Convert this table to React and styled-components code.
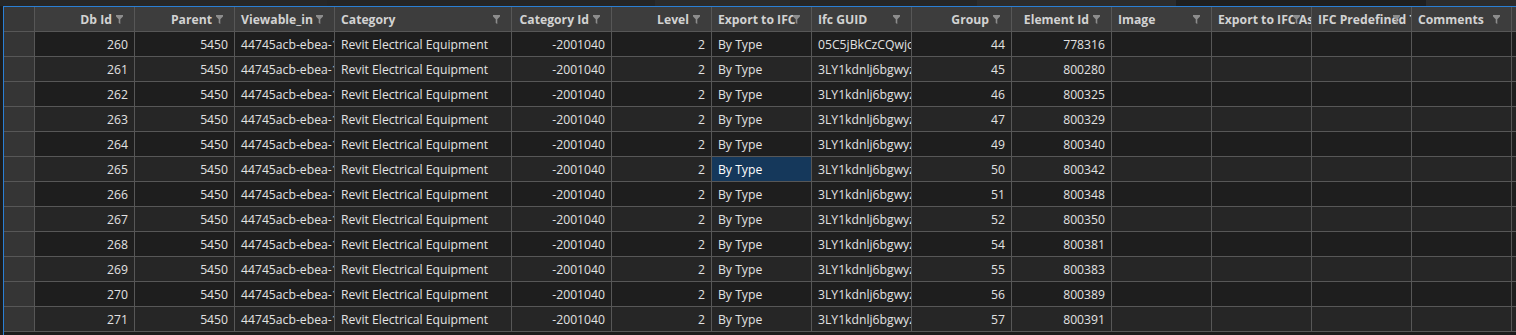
import React from 'react';
import styled, { createGlobalStyle } from 'styled-components';

const GlobalStyle = createGlobalStyle`
    html, body {
        margin: 0;
        height: 100%;
        overflow: hidden;
        background: #1c1c1c;
    }
    #root {
        height: 100%;
    }
`;

const columns = [
    { key: 'dbId', title: 'Db Id', width: 100, align: 'right' },
    { key: 'parent', title: 'Parent', width: 100, align: 'right' },
    { key: 'viewable', title: 'Viewable_in', width: 100, align: 'left' },
    { key: 'category', title: 'Category', width: 177, align: 'left' },
    { key: 'categoryId', title: 'Category Id', width: 100, align: 'right' },
    { key: 'level', title: 'Level', width: 100, align: 'right' },
    { key: 'exportIfc', title: 'Export to IFC', width: 100, align: 'left' },
    { key: 'guid', title: 'Ifc GUID', width: 100, align: 'left' },
    { key: 'group', title: 'Group', width: 100, align: 'right' },
    { key: 'elementId', title: 'Element Id', width: 100, align: 'right' },
    { key: 'image', title: 'Image', width: 100, align: 'left' },
    { key: 'exportAs', title: 'Export to IFC As', width: 100, align: 'left' },
    { key: 'predefined', title: 'IFC Predefined Type', width: 100, align: 'left' },
    { key: 'comments', title: 'Comments', width: 100, align: 'left' },
    { key: 'mark', title: 'Mark', width: 100, align: 'left' },
];

const groups = [44, 45, 46, 47, 49, 50, 51, 52, 54, 55, 56, 57];
const elementIds = [778316, 800280, 800325, 800329, 800340, 800342, 800348, 800350, 800381, 800383, 800389, 800391];

const rows = groups.map((group, i) => ({
    dbId: 260 + i,
    parent: 5450,
    viewable: '44745acb-ebea-1fb9-b091-69bd9e0c3a64',
    category: 'Revit Electrical Equipment',
    categoryId: -2001040,
    level: 2,
    exportIfc: 'By Type',
    guid: i === 0 ? '05C5jBkCzCQwjcR8nT2f0a' : '3LY1kdnlj6bgwyz9u4Xq1H',
    group,
    elementId: elementIds[i],
    image: '',
    exportAs: '',
    predefined: '',
    comments: '',
    mark: '',
}));

const selected = { row: 5, key: 'exportIfc' };

const gridTemplate = `31px ${columns.map((c) => c.width + 'px').join(' ')}`;

function FilterIcon() {
    return (
        <FilterMark width="7" height="9" viewBox="0 0 7 9">
            <path d="M0 0H7V1.6L4.3 4.2V9L2.7 8V4.2L0 1.6Z" fill="currentColor" />
        </FilterMark>
    );
}

export default function App() {
    return (
        <>
            <GlobalStyle />
            <Page>
                <TopStrip>
                    <StripPart $w={327} $tone="#272727" />
                    <StripPart $w={328} $tone="#252525" />
                    <StripPart $w={135} $tone="#2b2b2b" />
                    <StripPart $w={187} $tone="#262626" />
                    <StripPart $w={199} $tone="#2c2c2c" />
                    <StripPart $w={250} $tone="#1f1f1f" />
                    <StripPart $w={90} $tone="#2c2c2c" />
                </TopStrip>
                <Grid>
                    <Row>
                        <Corner />
                        {columns.map((c) => (
                            <HeaderCell key={c.key} $align={c.align}>
                                <HeaderLabel>{c.title}</HeaderLabel>
                                <FilterIcon />
                            </HeaderCell>
                        ))}
                    </Row>
                    {rows.map((r, i) => (
                        <Row key={r.dbId}>
                            <RowHeader />
                            {columns.map((c) => (
                                <Cell
                                    key={c.key}
                                    $align={c.align}
                                    $odd={i % 2 === 1}
                                    $selected={selected.row === i && selected.key === c.key}
                                >
                                    {r[c.key]}
                                </Cell>
                            ))}
                        </Row>
                    ))}
                </Grid>
            </Page>
        </>
    );
}

const Page = styled.div`
    height: 100%;
    display: flex;
    flex-direction: column;
    font-family: 'Open Sans', 'Noto Sans', sans-serif;
    font-size: 12.2px;
`;

const TopStrip = styled.div`
    height: 6px;
    display: flex;
    flex-shrink: 0;
`;

const StripPart = styled.div`
    width: ${(p) => p.$w}px;
    flex-shrink: 0;
    background: ${(p) => p.$tone};
`;

const Grid = styled.div`
    flex: 1;
    margin-left: 3px;
    border-top: 1px solid #2a7fd4;
    border-left: 1px solid #2a7fd4;
    overflow: hidden;
    background: #1b1b1b;
`;

const Row = styled.div`
    display: grid;
    grid-template-columns: ${gridTemplate};
    height: 25px;
`;

const BaseCell = styled.div`
    box-sizing: border-box;
    border-right: 1px solid #575757;
    border-bottom: 1px solid #575757;
    overflow: hidden;
    white-space: nowrap;
`;

const Corner = styled(BaseCell)`
    background: #383838;
`;

const RowHeader = styled(BaseCell)`
    background: #353535;
`;

const HeaderCell = styled(BaseCell)`
    position: relative;
    display: flex;
    align-items: center;
    justify-content: ${(p) => (p.$align === 'right' ? 'flex-end' : 'flex-start')};
    padding: 1px ${(p) => (p.$align === 'right' ? '22px' : '0')} 0 ${(p) => (p.$align === 'right' ? '0' : '6px')};
    background: #3d3d3d;
    color: #d2d2d2;
    font-weight: 700;
`;

const HeaderLabel = styled.span`
    white-space: nowrap;
`;

const FilterMark = styled.svg`
    position: absolute;
    right: 11px;
    top: 8px;
    color: #8d8d8d;
`;

const Cell = styled(BaseCell)`
    display: flex;
    align-items: center;
    justify-content: ${(p) => (p.$align === 'right' ? 'flex-end' : 'flex-start')};
    padding: 1px 6px 0;
    background: ${(p) => (p.$selected ? '#15385b' : p.$odd ? '#262626' : '#1e1e1e')};
    color: ${(p) => (p.$selected ? '#ffffff' : '#e2e2e2')};
`;
